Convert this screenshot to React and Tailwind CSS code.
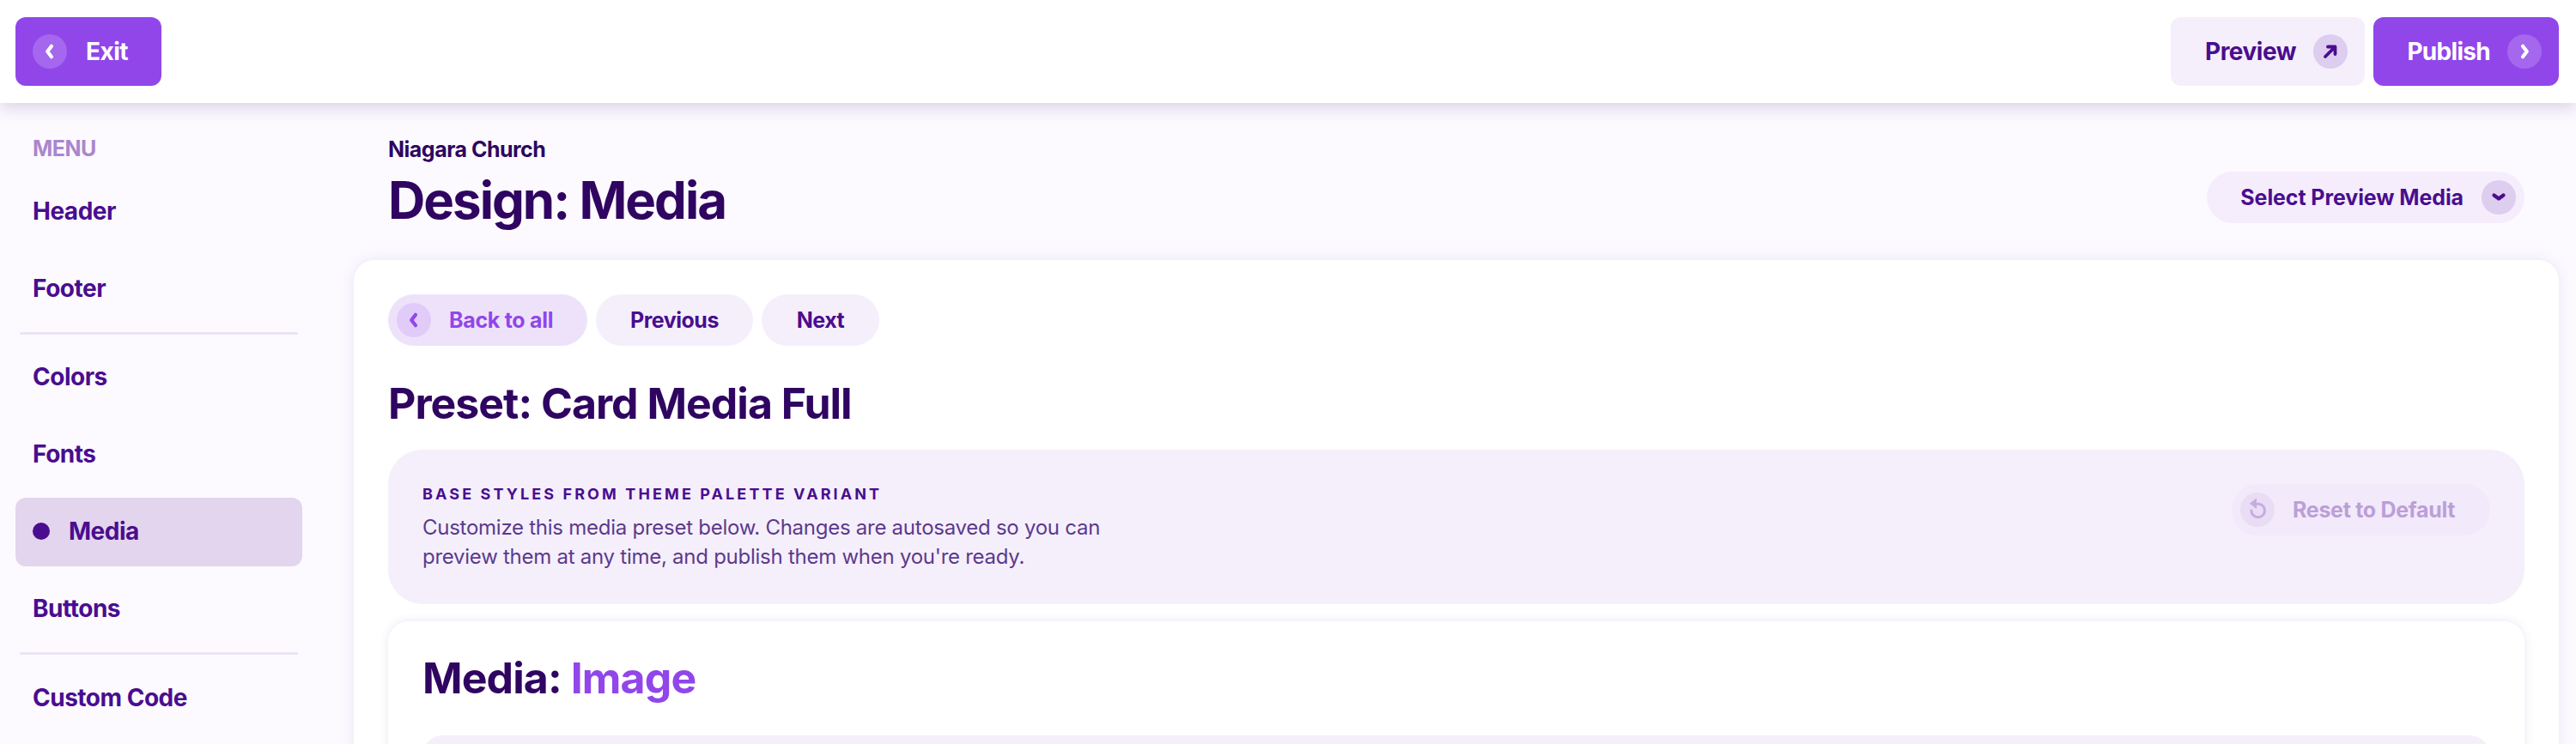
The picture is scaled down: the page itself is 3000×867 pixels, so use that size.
import React from 'react';

/* ─── ICONS ─────────────────────────────────────────────────────────────── */
function Chevron({ dir = 'left', className = '' }) {
  const d = {
    left: 'M12 3.8 7.2 10l4.8 6.2',
    right: 'M8 3.8 12.8 10 8 16.2',
    down: 'M4.5 7.5 10 11.5l5.5-4',
  }[dir];
  return (
    <svg viewBox="0 0 20 20" fill="none" className={className}>
      <path d={d} stroke="currentColor" strokeWidth="4.2" strokeLinecap="round" strokeLinejoin="round" />
    </svg>
  );
}

function ArrowUpRight({ className = '' }) {
  return (
    <svg viewBox="0 0 20 20" fill="none" className={className}>
      <path d="M4 16 14.5 5.5M7 4.5h8.5V13" stroke="currentColor" strokeWidth="3.8" strokeLinecap="round" strokeLinejoin="round" />
    </svg>
  );
}

function ResetIcon({ className = '' }) {
  return (
    <svg viewBox="0 0 28 28" fill="none" className={className}>
      <path d="M13 7.4A7.8 7.8 0 1 1 6.9 15" stroke="currentColor" strokeWidth="3" strokeLinecap="round" />
      <path d="M13 0.5 5 6.8l8 6.2z" fill="currentColor" />
    </svg>
  );
}

/* ─── SIDEBAR ───────────────────────────────────────────────────────────── */
function MenuItem({ label, active }) {
  return (
    <div
      className={`h-20 shrink-0 rounded-xl flex items-center pb-[2px] pr-[22px] text-[28px] tracking-[-0.5px] font-bold text-[#4a0d8f] ${
        active ? 'bg-[#e3d5ee] pl-5' : 'pl-[20px]'
      }`}
    >
      {active && <span className="w-5 h-5 rounded-full bg-[#4a0d8f] mr-[22px]" />}
      {label}
    </div>
  );
}

function Sidebar() {
  return (
    <aside className="w-[412px] shrink-0 pl-[18px] pr-[60px] pt-[34px] flex flex-col">
      <div className="h-10 mb-[13px] pl-[20px] flex items-center text-[25px] tracking-[-0.5px] font-bold text-[#ab86cd]">MENU</div>
      <div className="flex flex-col gap-[10px]">
        <MenuItem label="Header" />
        <MenuItem label="Footer" />
      </div>
      <div className="h-[3px] mx-[5px] mt-[10px] mb-[10px] rounded-full bg-[#ece3f4]" />
      <div className="flex flex-col gap-[10px]">
        <MenuItem label="Colors" />
        <MenuItem label="Fonts" />
        <MenuItem label="Media" active />
        <MenuItem label="Buttons" />
      </div>
      <div className="h-[3px] mx-[5px] mt-[10px] mb-[11px] rounded-full bg-[#ece3f4]" />
      <MenuItem label="Custom Code" />
    </aside>
  );
}

/* ─── MAIN COMPONENT ────────────────────────────────────────────────────── */
export default function App() {
  return (
    <div className="h-[867px] overflow-hidden flex flex-col bg-[#fcfaff] font-['Inter','Liberation_Sans',sans-serif]">

      {/* ── TOP BAR ── */}
      <header className="relative z-10 h-[120px] shrink-0 bg-white pr-[20px] pl-[18px] flex items-center justify-between shadow-[0_4px_20px_rgba(60,20,110,0.2)]">
        <button className="w-[170px] h-20 rounded-xl bg-[#9146ea] text-white flex items-center pl-5 text-[28px] tracking-[-0.5px] font-bold">
          <span className="w-10 h-10 rounded-full bg-[#a467ee] flex items-center justify-center mr-[22px]">
            <Chevron dir="left" className="w-5 h-5" />
          </span>
          Exit
        </button>
        <div className="flex gap-[10px]">
          <button className="w-[226px] h-20 rounded-xl bg-[#f5effc] text-[#4a0d8f] flex items-center justify-end pr-5 text-[28px] tracking-[-0.5px] font-bold">
            Preview
            <span className="w-10 h-10 rounded-full bg-[#ddcdee] flex items-center justify-center ml-5">
              <ArrowUpRight className="w-5 h-5" />
            </span>
          </button>
          <button className="w-[216px] h-20 rounded-xl bg-[#9146ea] text-white flex items-center justify-end pr-5 text-[28px] tracking-[-0.7px] font-bold">
            Publish
            <span className="w-10 h-10 rounded-full bg-[#a467ee] flex items-center justify-center ml-5">
              <Chevron dir="right" className="w-5 h-5" />
            </span>
          </button>
        </div>
      </header>

      <div className="flex-1 flex min-h-0">
        <Sidebar />

        <main className="flex-1 min-w-0 pr-5">
          {/* ── PAGE TITLE ── */}
          <div className="h-[183px] px-10 pt-[39px] flex justify-between items-start">
            <div>
              <div className="text-[25px] leading-[30px] tracking-[-0.5px] font-bold text-[#2f0561]">Niagara Church</div>
              <h1 className="mt-[9px] text-[60px] leading-[70px] tracking-[-2px] font-bold text-[#2f0561]">Design: Media</h1>
            </div>
            <button className="mt-[41px] w-[370px] h-[60px] rounded-full bg-[#f5edfc] text-[#4a0d8f] flex items-center justify-end pr-[10px] text-[25px] tracking-[-0.1px] font-bold">
              <span className="mt-[2px]">Select Preview Media</span>
              <span className="w-10 h-10 rounded-full bg-[#ddcdee] flex items-center justify-center ml-[21px]">
                <Chevron dir="down" className="w-5 h-5" />
              </span>
            </button>
          </div>

          {/* ── PRESET CARD ── */}
          <section className="h-[800px] rounded-3xl bg-white px-10 pt-10 shadow-[0_0_16px_rgba(90,40,160,0.1)]">
            <div className="flex gap-[10px]">
              <button className="w-[232px] h-[60px] rounded-full bg-[#eee2fb] text-[#9146ea] flex items-center pl-[10px] text-[25px] tracking-[-0.3px] font-bold">
                <span className="w-10 h-10 rounded-full bg-[#e0cbf9] flex items-center justify-center mr-[21px]">
                  <Chevron dir="left" className="w-5 h-5" />
                </span>
                <span className="mt-[2px]">Back to all</span>
              </button>
              <button className="w-[183px] h-[60px] pt-[2px] rounded-full bg-[#f5effc] text-[#4a0d8f] text-[25px] tracking-[-0.5px] font-bold">Previous</button>
              <button className="w-[137px] h-[60px] pt-[2px] rounded-full bg-[#f5effc] text-[#4a0d8f] text-[25px] tracking-[-0.5px] font-bold">Next</button>
            </div>

            <h2 className="mt-[37px] text-[50px] leading-[60px] tracking-[-1px] font-bold text-[#2f0561]">Preset: Card Media Full</h2>

            {/* ── INFO BOX ── */}
            <div className="mt-6 h-[180px] rounded-[40px] bg-[#f5effc] px-10 pt-10 flex justify-between items-start">
              <div>
                <div className="text-[18px] leading-6 font-bold tracking-[3.1px] text-[#4a0d8f]">BASE STYLES FROM THEME PALETTE VARIANT</div>
                <p className="mt-[10px] w-[830px] text-[24px] leading-[34px] tracking-[-0.26px] text-[#5c3a8c]">
                  Customize this media preset below. Changes are autosaved so you can preview them at any time, and publish them when you're ready.
                </p>
              </div>
              <button className="w-[301px] h-[60px] rounded-full bg-[#f2e9fa] text-[#bb9fd8] flex items-center pl-[10px] text-[25px] tracking-[-0.3px] font-bold">
                <span className="w-10 h-10 rounded-full bg-[#e9dcf5] flex items-center justify-center mr-[21px]">
                  <ResetIcon className="w-7 h-7 text-[#c6acdf]" />
                </span>
                <span className="mt-[2px]">Reset to Default</span>
              </button>
            </div>

            {/* ── MEDIA CARD ── */}
            <div className="mt-5 h-[400px] rounded-3xl bg-white px-10 pt-9 shadow-[0_0_12px_rgba(90,40,160,0.12)]">
              <h2 className="text-[50px] leading-[60px] tracking-[-0.9px] font-bold text-[#2f0561]">
                Media: <span className="text-[#9146ea]">Image</span>
              </h2>
              <div className="mt-[37px] h-[200px] rounded-3xl bg-[#f5effc]" />
            </div>
          </section>
        </main>
      </div>
    </div>
  );
}
